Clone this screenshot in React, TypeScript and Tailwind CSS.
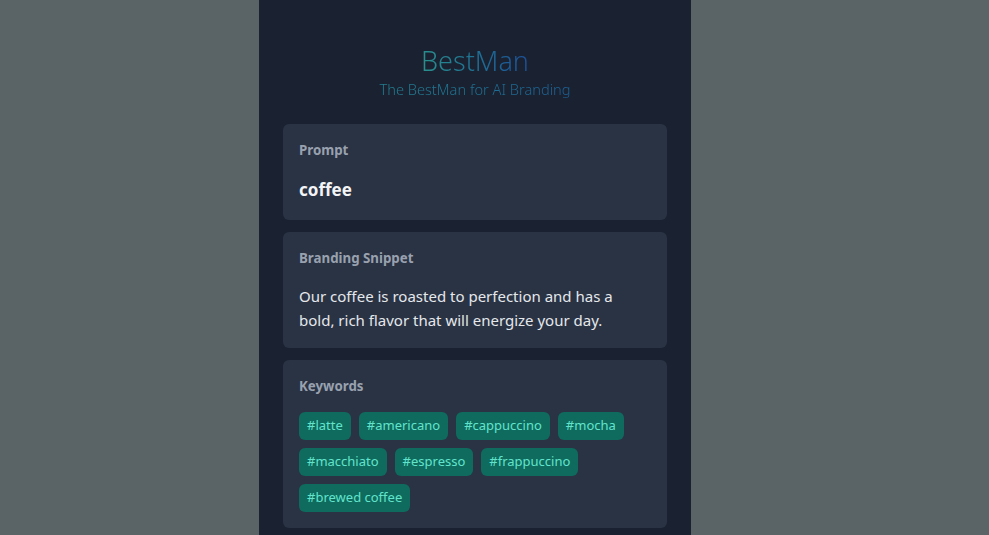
import * as React from "react";

const keywords = [
  "latte",
  "americano",
  "cappuccino",
  "mocha",
  "macchiato",
  "espresso",
  "frappuccino",
  "brewed coffee",
];

export default function App() {
  return (
    <div
      className="min-h-screen w-full bg-[#5a6366] flex justify-start pl-[259px]"
      style={{ fontFamily: '"Noto Sans", "Open Sans", sans-serif' }}
    >
      <div className="w-[432px] min-h-screen bg-[#1a2231] px-6 pt-[43px] pb-6">
        <div className="text-center mb-[25px]">
          <h1 className="text-[27px] leading-9 font-light bg-gradient-to-r from-[#2a8f8c] to-[#1d4f98] bg-clip-text text-transparent inline-block">
            BestMan
          </h1>
          <p className="text-[14.6px] leading-5 font-light bg-gradient-to-r from-[#2a8f8c] to-[#1d4f98] bg-clip-text text-transparent">
            The BestMan for AI Branding
          </p>
        </div>

        <div className="flex flex-col gap-3">
          <div className="bg-[#293344] rounded-md p-4">
            <div className="text-[13.3px] leading-5 font-bold text-gray-400">Prompt</div>
            <div className="mt-4 text-[17px] leading-7 font-bold text-gray-100">coffee</div>
          </div>

          <div className="bg-[#293344] rounded-md p-4">
            <div className="text-[13.3px] leading-5 font-bold text-gray-400">Branding Snippet</div>
            <p className="mt-4 text-[15px] leading-6 text-gray-200">
              Our coffee is roasted to perfection and has a bold, rich flavor
              that will energize your day.
            </p>
          </div>

          <div className="bg-[#293344] rounded-md px-4 pt-4 pb-4">
            <div className="text-[13.3px] leading-5 font-bold text-gray-400">Keywords</div>
            <div className="mt-4 flex flex-wrap gap-2">
              {keywords.map((k) => (
                <span
                  key={k}
                  className="h-7 px-2 flex items-center rounded-md bg-[#0e6b5e] text-[13px] text-[#62e4cc]"
                >
                  #{k}
                </span>
              ))}
            </div>
          </div>
        </div>
      </div>
    </div>
  );
}
